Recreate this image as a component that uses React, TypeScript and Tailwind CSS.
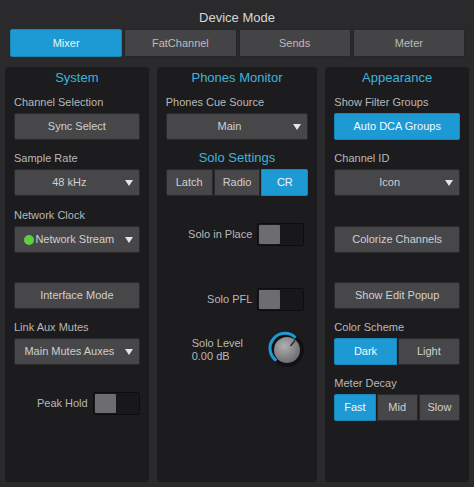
import React from "react";

const btnBase =
  "h-[27px] flex items-center justify-center rounded-[2px] border text-[11px] leading-[13px]";
const grayBtn = "bg-[#474749] border-[#2a2a2c] text-[#cfcfcf]";
const blueBtn = "bg-[#1d9ad4] border-[#1a86b8] text-[#f2f9fd]";

function Label({ children }: { children: React.ReactNode }) {
  return (
    <div className="h-[13px] text-[11px] leading-[13px] text-[#b8b8b8] whitespace-nowrap">
      {children}
    </div>
  );
}

function Title({ children, className = "" }: { children: React.ReactNode; className?: string }) {
  return (
    <div className={`h-[16px] text-center text-[13px] leading-[16px] text-[#3db4dc] ${className}`}>
      {children}
    </div>
  );
}

function Button({ children, active, className = "" }: { children: React.ReactNode; active?: boolean; className?: string }) {
  return (
    <div className={`${btnBase} ${active ? blueBtn : grayBtn} ${className}`}>{children}</div>
  );
}

function Dropdown({ children, className = "" }: { children: React.ReactNode; className?: string }) {
  return (
    <div className={`${btnBase} ${grayBtn} justify-start ${className}`}>
      <div className="flex-1 flex items-center justify-center whitespace-nowrap">{children}</div>
      <svg width="8" height="6" viewBox="0 0 8 6" className="ml-[1px] mr-[6px]">
        <path d="M0 0 L8 0 L4 6 Z" fill="#e4e4e4" />
      </svg>
    </div>
  );
}

function Segmented({ items, active, className = "" }: { items: string[]; active: number; className?: string }) {
  return (
    <div className={`flex h-[27px] gap-[1px] ${className}`}>
      {items.map((it, i) => (
        <div
          key={it}
          className={`flex-1 flex items-center justify-center border text-[11px] leading-[13px] ${
            i === active ? blueBtn : grayBtn
          } ${i === 0 ? "rounded-l-[2px]" : ""} ${i === items.length - 1 ? "rounded-r-[2px]" : ""}`}
        >
          {it}
        </div>
      ))}
    </div>
  );
}

function Toggle() {
  return (
    <div className="w-[47px] h-[23px] rounded-[2px] bg-[#18181a] border border-[#0d0d0e] p-[1px] flex">
      <div className="w-[21px] h-full bg-[#6d6d6f] rounded-[1px]" />
    </div>
  );
}

function ToggleRow({ label, className = "" }: { label: string; className?: string }) {
  return (
    <div className={`flex items-center justify-end gap-[5px] h-[23px] ${className}`}>
      <span className="text-[11px] leading-[13px] text-[#b8b8b8]">{label}</span>
      <Toggle />
    </div>
  );
}

function Knob() {
  const cx = 20;
  const cy = 20;
  const pt = (r: number, deg: number) => {
    const a = ((deg - 90) * Math.PI) / 180;
    return [cx + r * Math.cos(a), cy + r * Math.sin(a)];
  };
  const [sx, sy] = pt(15, -135);
  const [ex, ey] = pt(15, 35);
  const [p1x, p1y] = pt(6, 40);
  const [p2x, p2y] = pt(12, 40);
  return (
    <svg width="40" height="40" viewBox="0 0 40 40">
      <defs>
        <radialGradient id="kb" cx="40%" cy="35%" r="70%">
          <stop offset="0%" stopColor="#b0b0b2" />
          <stop offset="100%" stopColor="#6a6a6c" />
        </radialGradient>
      </defs>
      <circle cx={cx} cy={cy} r="17" fill="#111113" />
      <path
        d={`M${sx} ${sy} A15 15 0 1 1 ${ex} ${ey}`}
        stroke="#1d9ad4"
        strokeWidth="3"
        fill="none"
      />
      <circle cx={cx} cy={cy} r="13" fill="url(#kb)" />
      <line x1={p1x} y1={p1y} x2={p2x} y2={p2y} stroke="#2a2a2c" strokeWidth="1.5" strokeLinecap="round" />
    </svg>
  );
}

const panel = "h-[415px] bg-[#1c1c1e] rounded-[4px] px-[9px] pt-[3px] flex flex-col";

export default function App() {
  const tabs = ["Mixer", "FatChannel", "Sends", "Meter"];
  return (
    <div
      className="w-[474px] h-[487px] bg-[#2a2a2c] overflow-hidden flex flex-col"
      style={{ fontFamily: '"Liberation Sans", Arial, sans-serif' }}
    >
      <div className="h-[29px] pt-[10px] text-center text-[13px] leading-[16px] text-[#d6d6d6]">
        Device Mode
      </div>

      <div className="mx-[10px] w-[455px] h-[28px] grid grid-cols-4 gap-[2px]">
        {tabs.map((t, i) => (
          <div
            key={t}
            className={`flex items-center justify-center rounded-[2px] border text-[11px] ${
              i === 0
                ? "bg-[#1d9ad4] border-[#1a86b8] text-[#eaf6fc]"
                : "bg-[#444446] border-[#262628] text-[#bcbcbc]"
            }`}
          >
            {t}
          </div>
        ))}
      </div>

      <div className="mt-[10px] px-[5px] flex gap-[8px]">
        {/* System */}
        <div className={`${panel} w-[144px]`}>
          <Title>System</Title>
          <div className="mt-[10px]"><Label>Channel Selection</Label></div>
          <Button className="mt-[4px]">Sync Select</Button>
          <div className="mt-[12px]"><Label>Sample Rate</Label></div>
          <Dropdown className="mt-[4px]">48 kHz</Dropdown>
          <div className="mt-[13px]"><Label>Network Clock</Label></div>
          <Dropdown className="mt-[4px]">
            <span className="w-[10px] h-[10px] rounded-full bg-[#5cd13c] mr-[1px]" />
            Network Stream
          </Dropdown>
          <Button className="mt-[29px]">Interface Mode</Button>
          <div className="mt-[12px]"><Label>Link Aux Mutes</Label></div>
          <Dropdown className="mt-[4px]">Main Mutes Auxes</Dropdown>
          <ToggleRow label="Peak Hold" className="mt-[27px]" />
        </div>

        {/* Phones Monitor */}
        <div className={`${panel} w-[161px]`}>
          <Title>Phones Monitor</Title>
          <div className="mt-[10px]"><Label>Phones Cue Source</Label></div>
          <Dropdown className="mt-[4px]">Main</Dropdown>
          <Title className="mt-[10px]">Solo Settings</Title>
          <Segmented items={["Latch", "Radio", "CR"]} active={2} className="mt-[3px]" />
          <ToggleRow label="Solo in Place" className="mt-[27px] mr-[4px]" />
          <ToggleRow label="Solo PFL" className="mt-[42px] mr-[4px]" />
          <div className="mt-[19px] h-[40px] flex items-center">
            <div className="ml-[26px] w-[75px] text-[11px] leading-[13px] text-[#b8b8b8]">
              <div>Solo Level</div>
              <div>0.00 dB</div>
            </div>
            <Knob />
          </div>
        </div>

        {/* Appearance */}
        <div className={`${panel} w-[144px]`}>
          <Title>Appearance</Title>
          <div className="mt-[10px]"><Label>Show Filter Groups</Label></div>
          <Button active className="mt-[4px]">Auto DCA Groups</Button>
          <div className="mt-[12px]"><Label>Channel ID</Label></div>
          <Dropdown className="mt-[4px]">Icon</Dropdown>
          <Button className="mt-[30px]">Colorize Channels</Button>
          <Button className="mt-[29px]">Show Edit Popup</Button>
          <div className="mt-[12px]"><Label>Color Scheme</Label></div>
          <Segmented items={["Dark", "Light"]} active={0} className="mt-[4px]" />
          <div className="mt-[12px]"><Label>Meter Decay</Label></div>
          <Segmented items={["Fast", "Mid", "Slow"]} active={0} className="mt-[4px]" />
        </div>
      </div>
    </div>
  );
}
